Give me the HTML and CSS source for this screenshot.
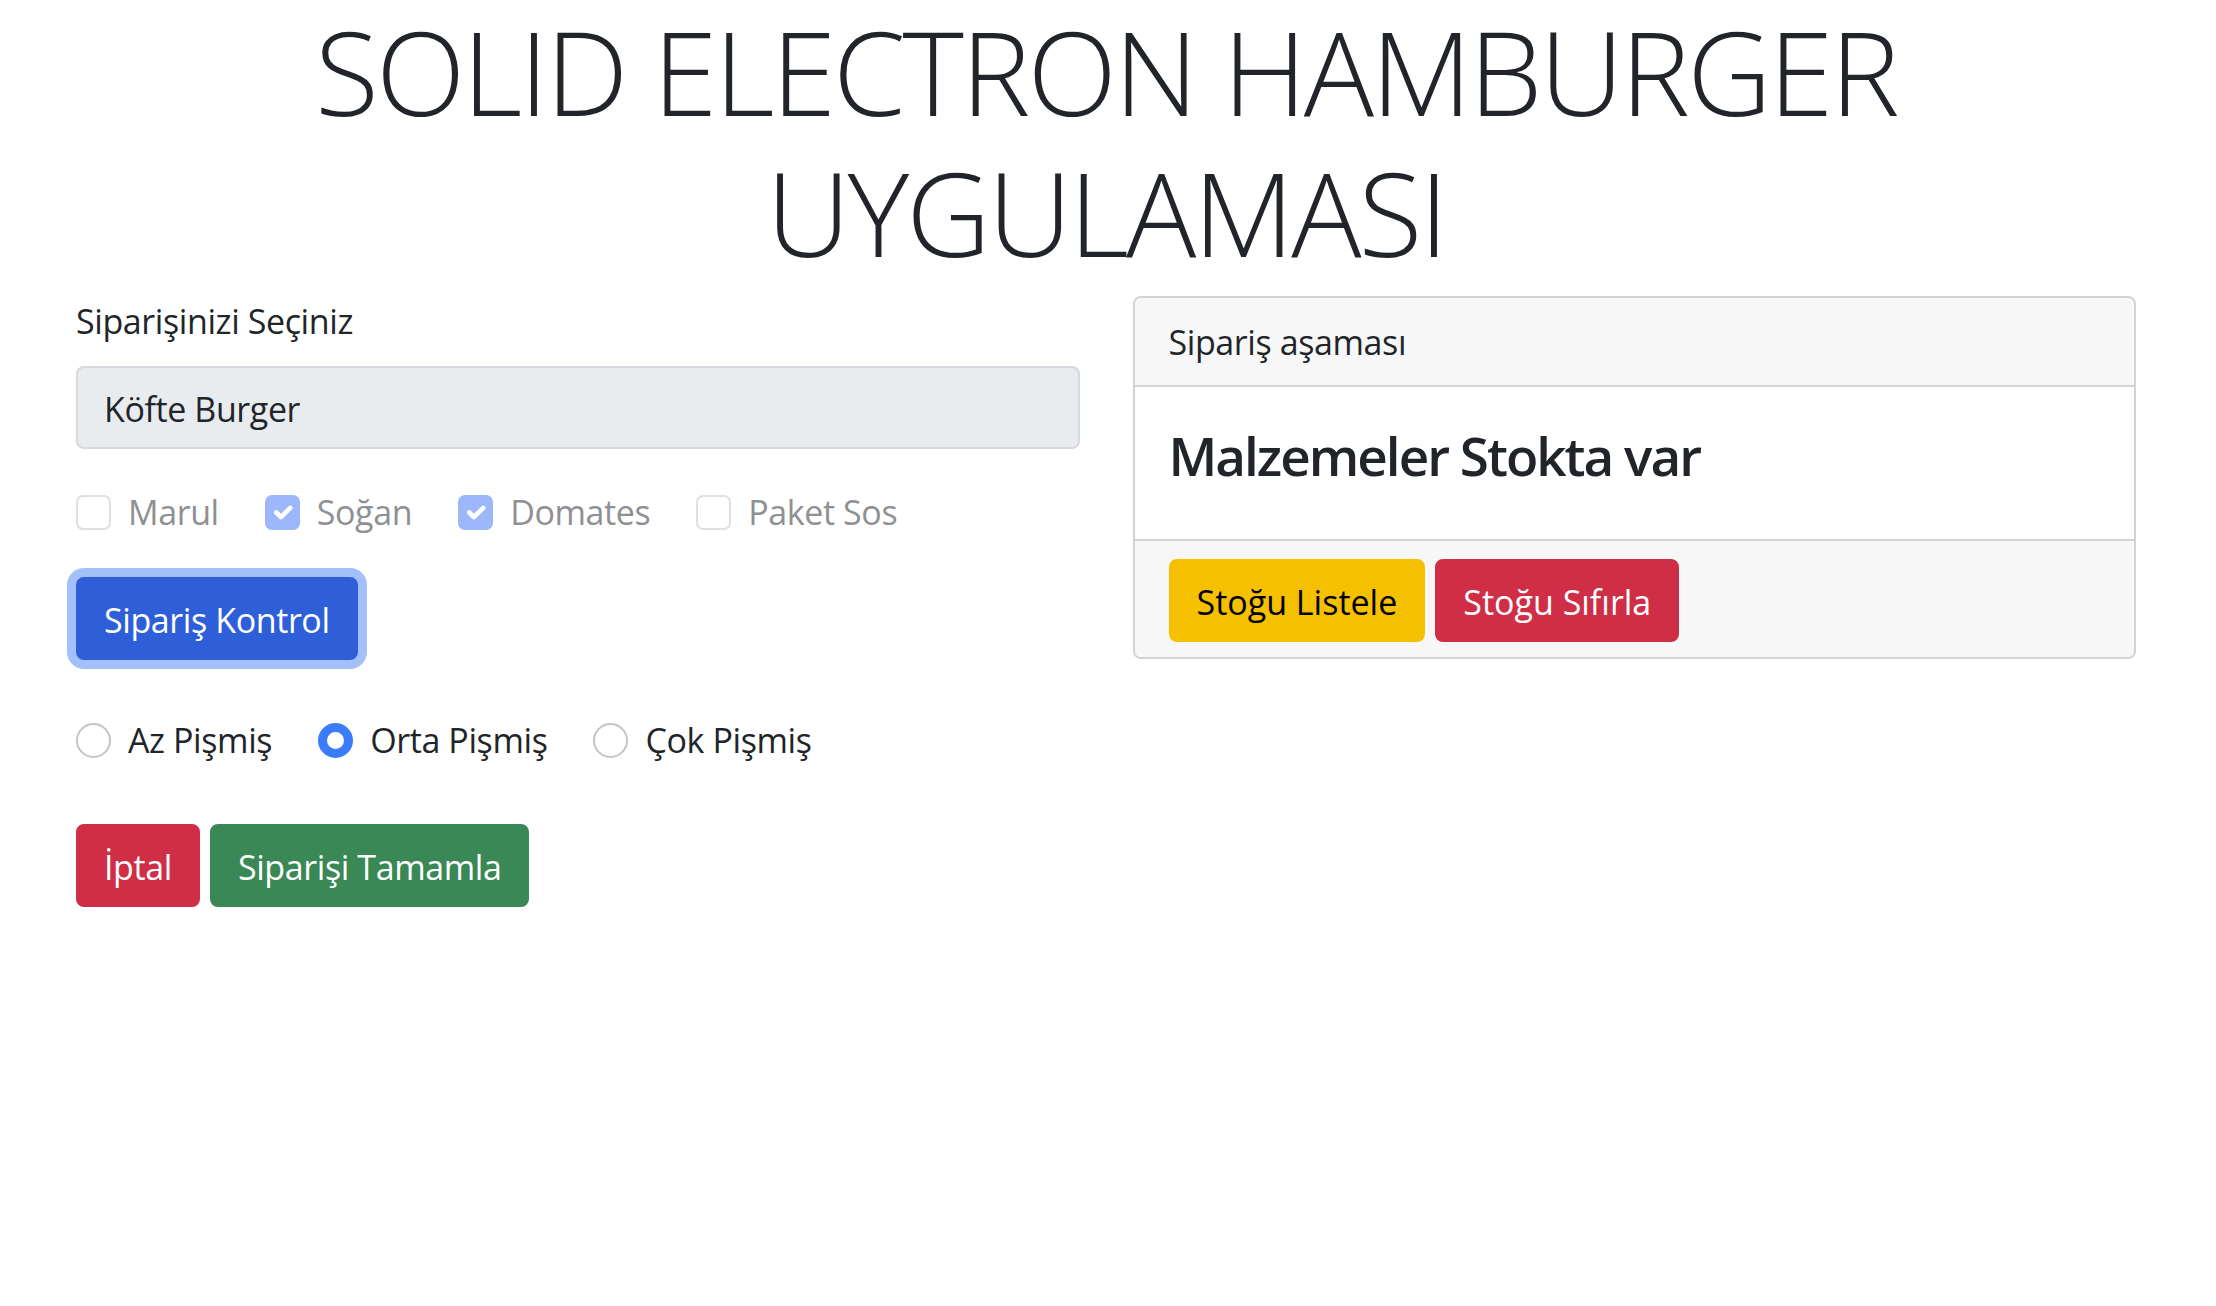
FILE: index.html
```html
<!DOCTYPE html>
<html lang="tr">
<head>
<meta charset="utf-8">
<title>Solid Electron Hamburger Uygulaması</title>
<link rel="stylesheet" href="styles.css">
</head>
<body>
<main class="page">
  <h1 class="title">SOLID ELECTRON HAMBURGER<br>UYGULAMASI</h1>
  <div class="row">
    <section class="order">
      <label class="form-label">Siparişinizi Seçiniz</label>
      <div class="select">Köfte Burger</div>
      <div class="checks">
        <label class="check disabled"><span class="box"></span><span class="txt">Marul</span></label>
        <label class="check disabled"><span class="box on"><svg viewBox="0 0 20 20"><path d="m6 10 3 3 6-6"/></svg></span><span class="txt">Soğan</span></label>
        <label class="check disabled"><span class="box on"><svg viewBox="0 0 20 20"><path d="m6 10 3 3 6-6"/></svg></span><span class="txt">Domates</span></label>
        <label class="check disabled"><span class="box"></span><span class="txt">Paket Sos</span></label>
      </div>
      <div class="control"><button class="btn btn-primary focused">Sipariş Kontrol</button></div>
      <div class="radios">
        <label class="check"><span class="radio"></span><span class="txt">Az Pişmiş</span></label>
        <label class="check"><span class="radio on"></span><span class="txt">Orta Pişmiş</span></label>
        <label class="check"><span class="radio"></span><span class="txt">Çok Pişmiş</span></label>
      </div>
      <div class="actions">
        <button class="btn btn-danger">İptal</button>
        <button class="btn btn-success">Siparişi Tamamla</button>
      </div>
    </section>
    <section class="card">
      <div class="card-header">Sipariş aşaması</div>
      <div class="card-body"><h3 class="card-title">Malzemeler Stokta var</h3></div>
      <div class="card-footer">
        <button class="btn btn-warning">Stoğu Listele</button>
        <button class="btn btn-danger">Stoğu Sıfırla</button>
      </div>
    </section>
  </div>
</main>
</body>
</html>
```

FILE: styles.css
```css
* { box-sizing: border-box; }
html, body { margin: 0; padding: 0; background: #fff; }
body {
  font-family: "Open Sans", "Noto Sans", "DejaVu Sans", sans-serif;
  font-size: 34px;
  line-height: 51px;
  letter-spacing: -0.4px;
  color: #212529;
}
.page { padding: 0 80px 0 76px; }
.title {
  margin: 0 0 14px;
  font-size: 117px;
  font-weight: 300;
  line-height: 141px;
  letter-spacing: -3px;
  text-align: center;
  color: #212529;
}
.row {
  display: grid;
  grid-template-columns: 1fr 1fr;
  column-gap: 53px;
  align-items: start;
}
.order { display: flex; flex-direction: column; align-items: flex-start; }
.form-label { display: block; margin-bottom: 19px; }
.select {
  align-self: stretch;
  height: 83px;
  padding: 4px 26px 0;
  display: flex;
  align-items: center;
  background: #e9ecef;
  border: 2px solid #d5d8dc;
  border-radius: 8px;
}
.checks, .radios { display: flex; margin-top: 38px; }
.radios { margin-top: 55px; }
.check { display: flex; align-items: center; margin-right: 46px; height: 51px; }
.check .txt { margin-left: 17px; }
.check.disabled .txt { color: #8e9093; }
.box {
  width: 35px; height: 35px;
  border: 2px solid #e0e0e0;
  border-radius: 7px;
  background: #fff;
  display: flex;
}
.box.on { background: #9db7fb; border-color: #9db7fb; }
.box svg { width: 100%; height: 100%; fill: none; stroke: #fff; stroke-width: 3; stroke-linecap: round; stroke-linejoin: round; }
.radio {
  width: 35px; height: 35px;
  border: 2px solid #c4c4c4;
  border-radius: 50%;
  background: #fff;
}
.radio.on { background: #fff; border: 9px solid #3b7cfb; }
.control { margin-top: 39px; }
.btn {
  font: inherit;
  letter-spacing: -0.4px;
  height: 83px;
  padding: 3px 26px 0;
  border: 2px solid transparent;
  border-radius: 8px;
  color: #fff;
  line-height: 51px;
  cursor: pointer;
}
.btn-primary { background: #2e5fd8; border-color: #2e5fd8; }
.focused { box-shadow: 0 0 0 9px #a3c0fb; }
.btn-danger { background: #cf2e46; border-color: #cf2e46; }
.btn-success { background: #398855; border-color: #398855; }
.btn-warning { background: #f5c000; border-color: #f5c000; color: #000; }
.actions, .card-footer { display: flex; gap: 10px; }
.actions { margin-top: 58px; }
.card {
  border: 2px solid #d3d3d3;
  border-radius: 8px;
  overflow: hidden;
}
.card-header {
  background: #f7f7f7;
  padding: 19px 34px 17px;
  border-bottom: 2px solid #d3d3d3;
}
.card-body { padding: 37px 34px 34px; }
.card-title {
  margin: 0 0 17px;
  font-size: 53px;
  font-weight: 600;
  line-height: 64px;
  letter-spacing: -2px;
}
.card-footer {
  background: #f7f7f7;
  border-top: 2px solid #d3d3d3;
  padding: 18px 34px 15px;
}
.card-footer .btn { letter-spacing: 0; }
```
